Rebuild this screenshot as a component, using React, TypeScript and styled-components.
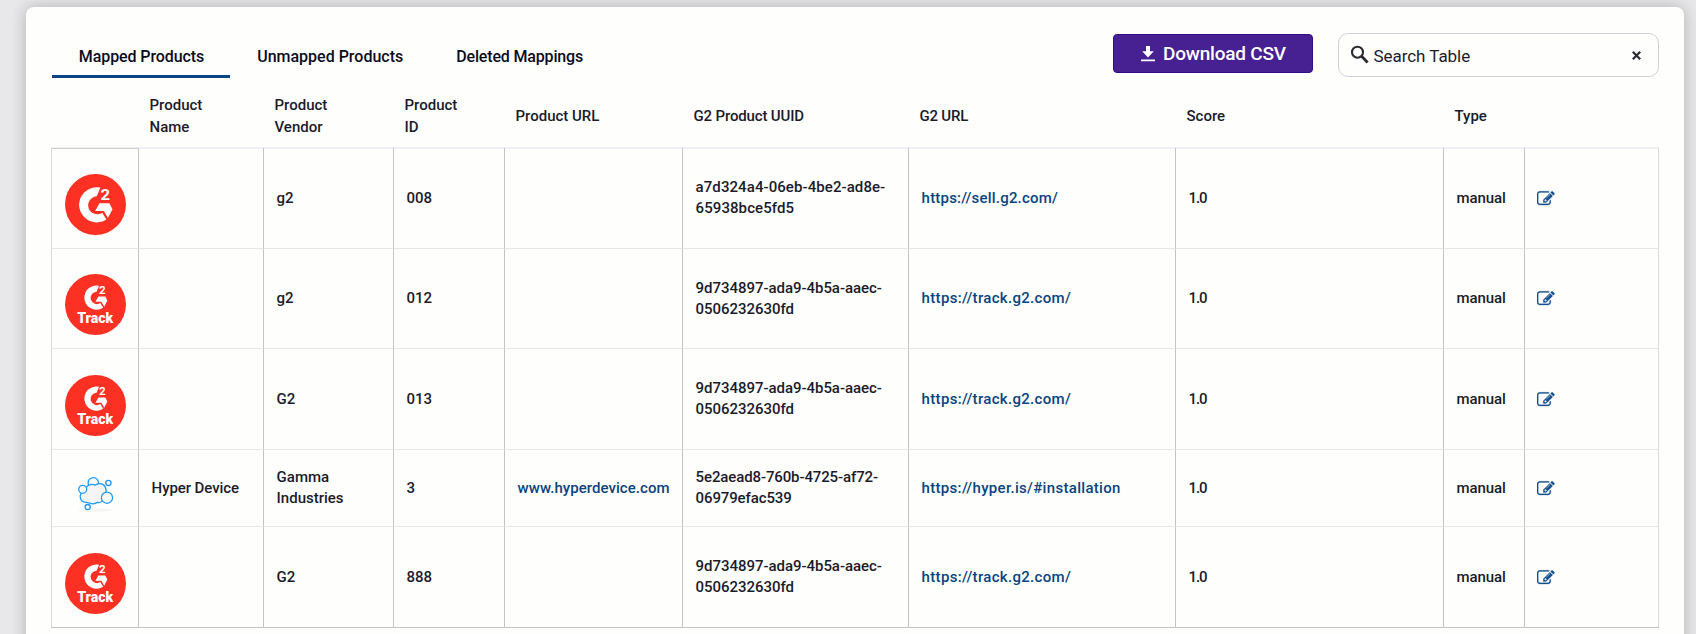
import React from 'react';
import styled, { createGlobalStyle } from 'styled-components';

const GlobalStyle = createGlobalStyle`
  *, *::before, *::after { box-sizing: border-box; }
  html, body { margin: 0; padding: 0; }
  body {
    height: 634px;
    overflow: hidden;
    background: #e8e8eb;
    font-family: Roboto, 'Liberation Sans', sans-serif;
    color: #1b1b2b;
  }
`;

const Page = styled.div`
  height: 634px;
  padding: 7px 12px 0 26px;
  overflow: hidden;
`;

const Card = styled.main`
  height: 680px;
  padding: 26px 25px 0;
  border-radius: 8px;
  background: #fefefd;
  box-shadow: 0 0 16px rgba(0, 0, 0, 0.24);
`;

const Toolbar = styled.header`
  display: flex;
  align-items: flex-start;
  height: 51px;
`;

const Tabs = styled.nav`
  display: flex;
  flex: 1;
  padding: 1px 0 0 1px;
`;

const Tab = styled.a<{ $active?: boolean; $tracking?: number }>`
  height: 44px;
  padding: 13px 26.2px 0 26.8px;
  border-bottom: 3px solid ${p => (p.$active ? '#0b4488' : 'transparent')};
  font-size: 16px;
  font-weight: 500;
  line-height: 20px;
  letter-spacing: ${p => p.$tracking ?? 0}px;
  color: #0b0b1c;
  white-space: nowrap;
`;

const DownloadButton = styled.button`
  display: flex;
  align-items: center;
  gap: 8px;
  width: 200px;
  height: 39px;
  margin: 1px 25px 0 0;
  padding: 1px 0 0 27px;
  border: 1px solid #340b86;
  border-radius: 4px;
  background: #472091;
  color: #fff;
  font: 500 19px/24px Roboto, 'Liberation Sans', sans-serif;
  letter-spacing: -0.2px;
  white-space: nowrap;
  svg { margin-bottom: 1px; }
`;

const SearchBox = styled.label`
  display: flex;
  align-items: center;
  width: 321px;
  height: 44px;
  padding: 0 17px 0 10px;
  border: 1px solid #d0d0d7;
  border-radius: 10px;
`;

const SearchText = styled.span`
  flex: 1;
  padding: 2px 0 0 0.5px;
  font-size: 17px;
  line-height: 22px;
  letter-spacing: -0.05px;
`;

const columns = '87px 125px 130px 111px 178px 226px 267px 268px 81px 135px';

const HeadRow = styled.div`
  display: grid;
  grid-template-columns: ${columns};
  height: 65px;
  border-bottom: 2px solid #f0f0f4;
`;

const HeadCell = styled.div<{ $narrow?: boolean; $tracking?: number }>`
  display: flex;
  align-items: center;
  padding: 2.4px ${p => (p.$narrow ? 40 : 0)}px 0 11.5px;
  font-size: 15px;
  font-weight: 500;
  line-height: 21.4px;
  letter-spacing: ${p => p.$tracking ?? 0}px;
`;

const Body = styled.div`
  margin-top: -1px;
  border-bottom: 1px solid #c4c4c4;
`;

const Row = styled.div<{ $height: number }>`
  display: grid;
  grid-template-columns: ${columns};
  height: ${p => p.$height}px;
  &:first-child > :first-child { border-top: 1px solid #cfcfcf; }
`;

const Cell = styled.div<{ $tracking?: number }>`
  display: flex;
  align-items: center;
  padding: 0.3px 0 0 12.6px;
  border-left: 1px solid #c4c4c4;
  border-bottom: 1px solid #e7e7ea;
  font-size: 15px;
  font-weight: 500;
  line-height: 21px;
  letter-spacing: ${p => p.$tracking ?? 0}px;
  white-space: pre-line;
  ${Row}:last-child > & { border-bottom: 0; }
`;

const LogoCell = styled(Cell)`
  justify-content: center;
  padding: 12.6px 0 0;
  border-left-color: #d8d8d8;
`;

const ActionCell = styled(Cell)`
  padding-top: 1px;
  padding-left: 12px;
  border-right: 1px solid #dcdce0;
  color: #14508e;
`;

const Link = styled.a`
  color: #0b4480;
  white-space: nowrap;
`;

const G2Mark = () => (
  <>
    <path d="M35.4 13.6A17.6 17.6 0 1 0 41.4 45.5L37.3 38.7A9 9 0 1 1 31.8 22.3Z" fill="#fff" />
    <path d="M34.5 29.3H44.4L47.5 35.2L42.9 44L38.9 37H30.2Z" fill="#fff" />
    <text x="35.4" y="25.8" fontSize="14.5" fontWeight="700" fill="#fff" textLength="9.6" lengthAdjust="spacingAndGlyphs">2</text>
  </>
);

const G2Logo = () => (
  <svg width="61" height="61" viewBox="0 0 61 61">
    <circle cx="30.5" cy="30.5" r="30.5" fill="#fc3123" />
    <G2Mark />
  </svg>
);

const G2TrackLogo = () => (
  <svg width="61" height="61" viewBox="0 0 61 61">
    <circle cx="30.5" cy="30.5" r="30.5" fill="#fc3123" />
    <g transform="translate(9.6 2.3) scale(.69)"><G2Mark /></g>
    <text x="12.2" y="49.3" fontSize="14" fontWeight="900" fill="#fff" textLength="36" lengthAdjust="spacingAndGlyphs">Track</text>
  </svg>
);

const BubblesLogo = () => (
  <svg width="40" height="40" viewBox="0 0 40 40" fill="#fbfbfc" stroke="#1d98f3" strokeWidth="1.3">
    <ellipse cx="20" cy="36.2" rx="17" ry="1.6" fill="#f5f5f6" stroke="none" />
    <circle cx="18.3" cy="8.8" r="5.2" />
    <path fill="#f5f5f7" d="M7.5 17.5C4 21 4.2 28.3 11.2 28.4C13.3 28.2 15 29.8 18 29.8C20.2 29.8 21 28.6 22.8 28.4C25 29 27 27.6 28 26L31 20C32.2 14.5 29.5 9.8 25.2 9.6C22.6 9.4 21.2 11 19.6 11C17.6 9.8 13.4 10.2 11.5 13.2Z" />
    <circle cx="7.7" cy="15.3" r="4" />
    <circle cx="32" cy="23.7" r="5.6" />
    <circle cx="33.4" cy="8.9" r="2.6" />
    <circle cx="12.7" cy="33.1" r="2.6" />
  </svg>
);

const DownloadIcon = () => (
  <svg width="14" height="16" viewBox="0 0 14 16" fill="currentColor">
    <path d="M5 0h4v5.3h3.8L7 11.4 1.2 5.3H5zM0 13.4h14v1.9H0z" />
  </svg>
);

const SearchIcon = () => (
  <svg width="24" height="24" viewBox="0 0 24 24" fill="none" stroke="#2a2a33">
    <circle cx="8.5" cy="9.2" r="5.5" strokeWidth="2.1" />
    <path d="M12.6 13.3l6 6.1" strokeWidth="2.8" />
  </svg>
);

const ClearIcon = () => (
  <svg width="9" height="9" viewBox="0 0 9 9" stroke="#2a2a33" strokeWidth="2.2">
    <path d="M.8.8l7.4 7.4M8.2.8L.8 8.2" />
  </svg>
);

const EditIcon = () => (
  <svg width="17.6" height="17.6" viewBox="0 0 1792 1792" fill="currentColor" stroke="currentColor" strokeWidth="24">
    <path d="M888 1184l116-116-152-152-116 116v56h96v96h56zm440-720q-16-16-33 1l-350 350q-17 17-1 33t33-1l350-350q17-17 1-33zm80 594v190q0 119-84.5 203.5t-203.5 84.5h-832q-119 0-203.5-84.5t-84.5-203.5v-832q0-119 84.5-203.5t203.5-84.5h832q63 0 117 25 15 7 18 23 3 17-9 29l-49 49q-14 14-32 8-23-6-45-6h-832q-66 0-113 47t-47 113v832q0 66 47 113t113 47h832q66 0 113-47t47-113v-126q0-13 9-22l64-64q15-15 35-7t20 29zm-96-738l288 288-672 672h-288v-288zm444 132l-92 92-288-288 92-92q28-28 68-28t68 28l152 152q28 28 28 68t-28 68z" />
  </svg>
);

const logos = { g2: G2Logo, track: G2TrackLogo, bubbles: BubblesLogo };

interface Mapping {
  logo: keyof typeof logos;
  name?: string;
  vendor: string;
  id: string;
  url?: string;
  uuid: string;
  g2Url: string;
  uuidTracking: number;
  tracking: number;
  height: number;
}

const TRACK_UUID = '9d734897-ada9-4b5a-aaec-\n0506232630fd';
const TRACK_URL = 'https://track.g2.com/';

const mappings: Mapping[] = [
  { logo: 'g2', vendor: 'g2', id: '008', uuid: 'a7d324a4-06eb-4be2-ad8e-\n65938bce5fd5', g2Url: 'https://sell.g2.com/', uuidTracking: 0.08, tracking: 0.2, height: 101 },
  { logo: 'track', vendor: 'g2', id: '012', uuid: TRACK_UUID, g2Url: TRACK_URL, uuidTracking: -0.04, tracking: 0.32, height: 100 },
  { logo: 'track', vendor: 'G2', id: '013', uuid: TRACK_UUID, g2Url: TRACK_URL, uuidTracking: -0.04, tracking: 0.32, height: 101 },
  { logo: 'bubbles', name: 'Hyper Device', vendor: 'Gamma\nIndustries', id: '3', url: 'www.hyperdevice.com', uuid: '5e2aead8-760b-4725-af72-\n06979efac539', g2Url: 'https://hyper.is/#installation', uuidTracking: -0.12, tracking: 0.31, height: 77 },
  { logo: 'track', vendor: 'G2', id: '888', uuid: TRACK_UUID, g2Url: TRACK_URL, uuidTracking: -0.04, tracking: 0.32, height: 100 },
];

export default function App() {
  return (
    <Page>
      <GlobalStyle />
      <Card>
        <Toolbar>
          <Tabs>
            <Tab $active $tracking={-0.09}>Mapped Products</Tab>
            <Tab>Unmapped Products</Tab>
            <Tab $tracking={-0.16}>Deleted Mappings</Tab>
          </Tabs>
          <DownloadButton><DownloadIcon />Download CSV</DownloadButton>
          <SearchBox>
            <SearchIcon />
            <SearchText>Search Table</SearchText>
            <ClearIcon />
          </SearchBox>
        </Toolbar>
        <HeadRow>
          <HeadCell />
          <HeadCell $narrow>Product Name</HeadCell>
          <HeadCell $narrow>Product Vendor</HeadCell>
          <HeadCell $narrow>Product ID</HeadCell>
          <HeadCell>Product URL</HeadCell>
          <HeadCell $tracking={-0.15}>G2 Product UUID</HeadCell>
          <HeadCell $tracking={-0.2}>G2 URL</HeadCell>
          <HeadCell>Score</HeadCell>
          <HeadCell>Type</HeadCell>
          <HeadCell />
        </HeadRow>
        <Body>
          {mappings.map((m, i) => {
            const Logo = logos[m.logo];
            return (
              <Row key={i} $height={m.height}>
                <LogoCell><Logo /></LogoCell>
                <Cell $tracking={-0.08}>{m.name}</Cell>
                <Cell>{m.vendor}</Cell>
                <Cell $tracking={-0.1}>{m.id}</Cell>
                <Cell $tracking={0.05}>{m.url && <Link>{m.url}</Link>}</Cell>
                <Cell $tracking={m.uuidTracking}>{m.uuid}</Cell>
                <Cell $tracking={m.tracking}><Link>{m.g2Url}</Link></Cell>
                <Cell $tracking={-1.2}>1.0</Cell>
                <Cell $tracking={-0.1}>manual</Cell>
                <ActionCell><EditIcon /></ActionCell>
              </Row>
            );
          })}
        </Body>
      </Card>
    </Page>
  );
}
